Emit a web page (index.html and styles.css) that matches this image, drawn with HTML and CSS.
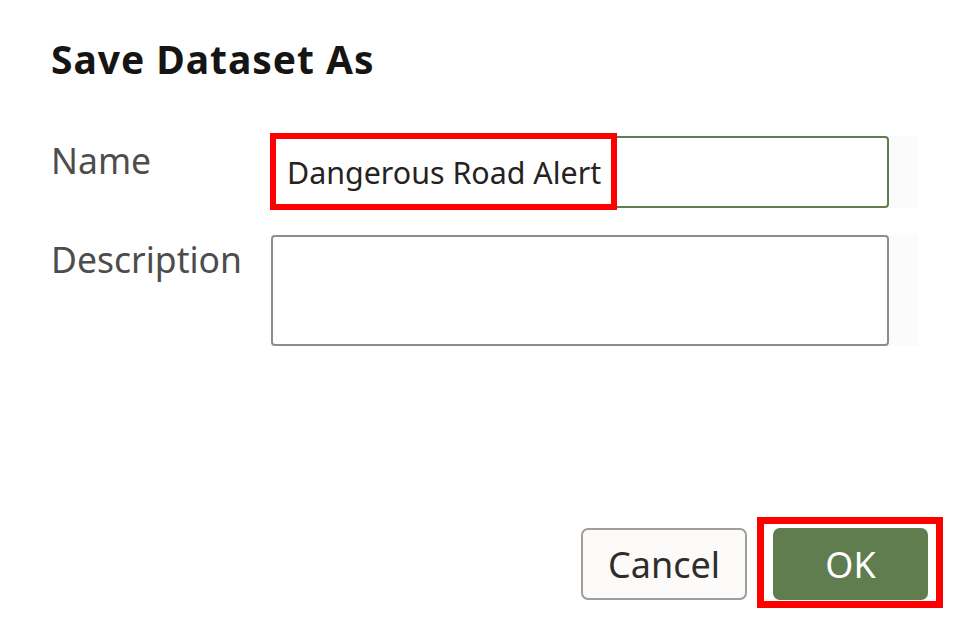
FILE: index.html
```html
<!DOCTYPE html>
<html lang="en">
<head>
<meta charset="utf-8">
<title>Save Dataset As</title>
<link rel="stylesheet" href="styles.css">
</head>
<body>
<div class="dialog">
  <h1 class="title">Save Dataset As</h1>
  <div class="form">
    <div class="row">
      <div class="label label-name">Name</div>
      <div class="field-wrap">
        <div class="input marked"><span class="value">Dangerous Road Alert</span></div>
      </div>
    </div>
    <div class="row">
      <div class="label label-desc">Description</div>
      <div class="field-wrap">
        <div class="textarea"></div>
      </div>
    </div>
  </div>
  <div class="footer">
    <button class="btn btn-cancel">Cancel</button>
    <button class="btn btn-ok marked-btn">OK</button>
  </div>
</div>
</body>
</html>
```
FILE: styles.css
```css
html, body {
  margin: 0;
  padding: 0;
  background: #ffffff;
}
body {
  font-family: "Noto Sans", "Open Sans", sans-serif;
  color: #161513;
  width: 972px;
  height: 631px;
  overflow: hidden;
}
.dialog {
  display: flex;
  flex-direction: column;
  padding: 31px 0 0 51px;
  height: 631px;
  box-sizing: border-box;
}
.title {
  margin: 0;
  font-size: 39px;
  font-weight: 700;
  line-height: 56px;
  color: #161513;
  letter-spacing: 0.95px;
}
.form {
  display: flex;
  flex-direction: column;
  gap: 27px;
  margin-top: 49px;
}
.row {
  display: flex;
}
.label {
  width: 220px;
  font-size: 35.5px;
  color: #4f4d4b;
  line-height: 48px;
}
.label-name {
  padding-top: 0;
}
.label-desc {
  padding-top: 0;
}
.field-wrap {
  background: #fbfbfb;
  padding-right: 29px;
  display: flex;
}
.input {
  width: 618px;
  height: 72px;
  box-sizing: border-box;
  border: 2px solid #5f7d4f;
  border-radius: 4px;
  background: #fff;
  display: flex;
  align-items: center;
  padding-left: 14px;
  padding-top: 0;
  position: relative;
}
.value {
  font-size: 30.4px;
  color: #252321;
}
.marked::after {
  content: "";
  position: absolute;
  left: -3px;
  top: -5px;
  width: 347px;
  height: 77px;
  border: 6px solid #ff0000;
  box-sizing: border-box;
}
.textarea {
  width: 618px;
  height: 111px;
  box-sizing: border-box;
  border: 2px solid #8f8b87;
  border-radius: 4px;
  background: #fff;
}
.footer {
  margin-top: auto;
  margin-bottom: 31px;
  display: flex;
  justify-content: flex-end;
  gap: 26px;
  padding-right: 44px;
}
.btn {
  height: 72px;
  border-radius: 7px;
  font-family: "Noto Sans", "Open Sans", sans-serif;
  font-size: 36px;
  box-sizing: border-box;
  cursor: pointer;
  padding: 0;
}
.btn-cancel {
  width: 166px;
  background: #fcfbfa;
  border: 2px solid #a19d98;
  color: #2f2d2b;
}
.btn-ok {
  width: 155px;
  background: #5f7d4f;
  border: none;
  color: #ffffff;
  position: relative;
}
.marked-btn::after {
  content: "";
  position: absolute;
  left: -16px;
  top: -11px;
  width: 186px;
  height: 91px;
  border: 7px solid #ff0000;
  box-sizing: border-box;
}
```
